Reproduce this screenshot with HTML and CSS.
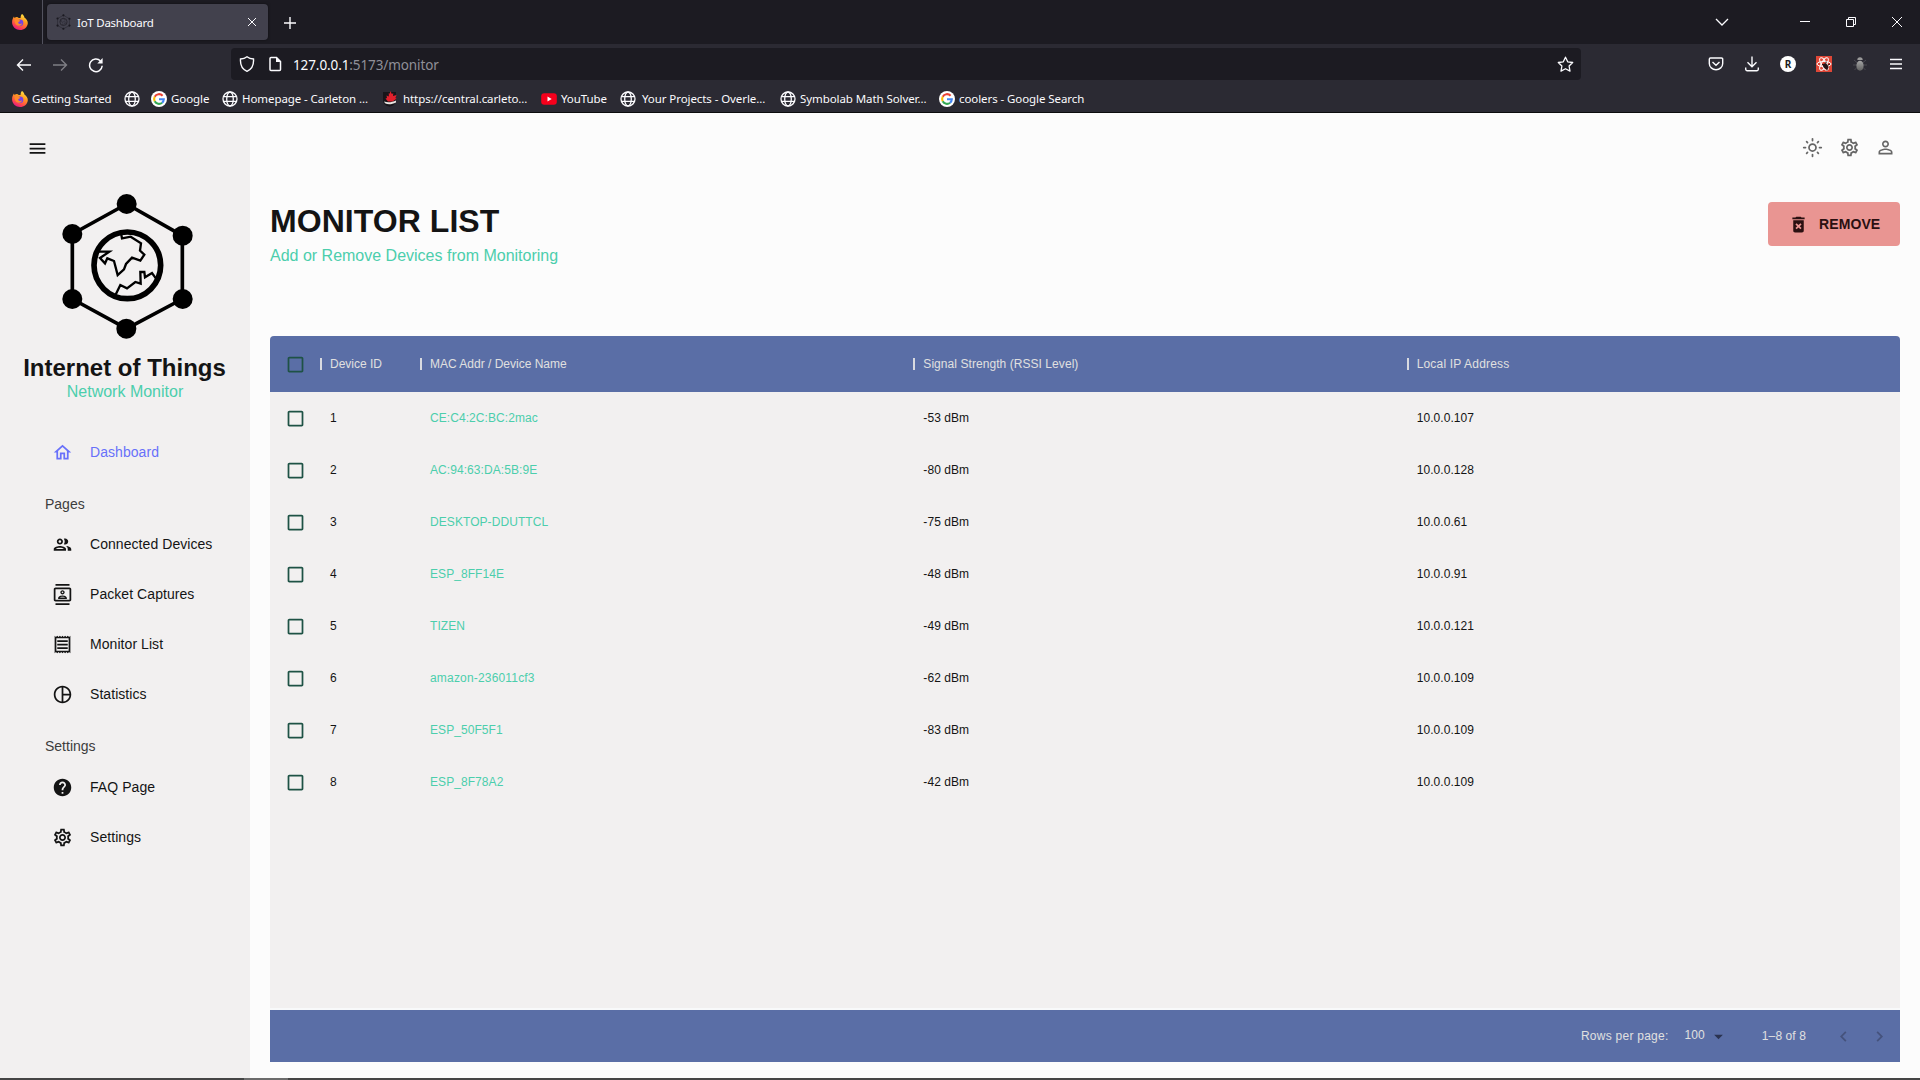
FILE: index.html
```html
<!DOCTYPE html>
<html lang="en">
<head>
<meta charset="utf-8">
<title>IoT Dashboard</title>
<link rel="stylesheet" href="styles.css">
</head>
<body>
<svg class="defs" width="0" height="0" aria-hidden="true">
  <defs>
    <linearGradient id="fx-flame" x1="0.8" y1="0" x2="0.3" y2="1">
      <stop offset="0" stop-color="#fff04a"/><stop offset="0.4" stop-color="#ff9a1f"/><stop offset="0.75" stop-color="#ff4a4a"/><stop offset="1" stop-color="#e31587"/>
    </linearGradient>
    <linearGradient id="bug-body" x1="0" y1="0" x2="0" y2="1"><stop offset="0" stop-color="#a5a5a5"/><stop offset="1" stop-color="#5e5e5e"/></linearGradient>
  </defs>
  <symbol id="firefox" viewBox="0 0 16 16">
    <path d="M10 0c1.600 1 2.200 2.300 2.400 3.400C14.600 5 16 7 15.800 9.500 15.400 13.300 12.200 16 8 16S.3 12.900.1 8.800C0 6.300.8 4 2 2.600l.5 1.500C3.200 3.200 4.300 2.800 5.200 2.900 6.200 3.800 7.500 4 8.600 4 8.500 2.500 9 1 10 0z" fill="url(#fx-flame)"/>
    <circle cx="8" cy="8.700" r="3.300" fill="#7542e5"/>
    <path d="M2.800 4.800C4.800 4.200 6.500 5 7.400 6.200 8.600 6.300 8.500 7.300 7.200 7.600 5.800 8 6 9.300 7 9.800c1.200.6 2.500.2 3-.7-.1 2-1.800 3-3.600 2.700C3.500 11.300 2 8 2.800 4.800z" fill="#ff8a2a"/>
  </symbol>
  <symbol id="globe" viewBox="0 0 16 16">
    <g fill="none" stroke="#fbfbfe" stroke-width="1.300"><circle cx="8" cy="8" r="7"/><ellipse cx="8" cy="8" rx="3.300" ry="7"/><path d="M1.500 5.700h13M1.500 10.300h13"/></g>
  </symbol>
  <symbol id="google" viewBox="0 0 16 16">
    <circle cx="8" cy="8" r="8" fill="#fff"/>
    <g fill="none" stroke-width="2.100"><path d="M11.600 4.700A4.900 4.900 0 0 0 3.700 5.700" stroke="#ea4335"/><path d="M3.700 5.700a4.900 4.900 0 0 0 0 4.600" stroke="#fbbc05"/><path d="M3.700 10.300a4.900 4.900 0 0 0 7.400 1.400" stroke="#34a853"/><path d="M11.100 11.700A4.900 4.900 0 0 0 12.800 8.200H8" stroke="#4285f4"/></g>
  </symbol>
  <symbol id="network" viewBox="183 246 399 444">
    <path d="M380 282 547 377V567L380 656 217 567V372Z" fill="none" stroke="currentColor" stroke-width="11"/>
    <g fill="currentColor"><circle cx="380" cy="282" r="30"/><circle cx="548" cy="377" r="30"/><circle cx="548" cy="567" r="30"/><circle cx="379" cy="656" r="30"/><circle cx="217" cy="567" r="30"/><circle cx="217" cy="372" r="30"/></g>
    <circle cx="382" cy="466" r="100" fill="none" stroke="currentColor" stroke-width="17"/>
    <path d="M363 370 366 385 392 380 423 400 420 422 433 434 421 452 396 443 378 462 372 478 353 495 342 453 322 445 315 460 300 444 328 425H290M346 556 361 525 381 535 406 516 422 521 421 486H433L435 502 456 489 470 508" fill="none" stroke="currentColor" stroke-width="7"/>
  </symbol>
  <symbol id="gear" viewBox="0 0 24 24"><path d="M19.430 12.980c.04-.32.07-.64.07-.98 0-.34-.03-.66-.07-.98l2.110-1.650c.19-.15.24-.42.12-.64l-2-3.460c-.09-.16-.26-.25-.44-.25-.06 0-.12.01-.17.03l-2.490 1c-.52-.4-1.080-.73-1.690-.98l-.38-2.650C14.460 2.180 14.250 2 14 2h-4c-.25 0-.46.18-.49.42l-.38 2.650c-.61.25-1.170.59-1.690.98l-2.490-1c-.06-.02-.12-.03-.18-.03-.17 0-.34.09-.43.25l-2 3.460c-.13.22-.07.49.12.64l2.110 1.650c-.04.32-.07.65-.07.98 0 .33.03.66.07.98l-2.110 1.650c-.19.15-.24.42-.12.64l2 3.460c.09.16.26.25.44.25.06 0 .12-.01.17-.03l2.490-1c.52.4 1.080.73 1.690.98l.38 2.650c.03.24.24.42.49.42h4c.25 0 .46-.18.49-.42l.38-2.650c.61-.25 1.170-.59 1.690-.98l2.490 1c.06.02.12.03.18.03.17 0 .34-.09.43-.25l2-3.460c.12-.22.07-.49-.12-.64l-2.110-1.650zm-1.980-1.710c.04.31.05.52.05.73 0 .21-.02.43-.05.73l-.14 1.130.89.7 1.080.84-.7 1.210-1.270-.51-1.040-.42-.9.68c-.43.32-.84.56-1.250.73l-1.060.43-.16 1.130-.2 1.350h-1.400l-.19-1.350-.16-1.130-1.060-.43c-.43-.18-.83-.41-1.230-.71l-.91-.7-1.060.43-1.270.51-.7-1.210 1.080-.84.89-.7-.14-1.130c-.03-.31-.05-.54-.05-.74s.02-.43.05-.73l.14-1.130-.89-.7-1.080-.84.7-1.210 1.270.51 1.040.42.9-.68c.43-.32.84-.56 1.250-.73l1.060-.43.16-1.130.2-1.350h1.390l.19 1.350.16 1.130 1.060.43c.43.18.83.41 1.230.71l.91.7 1.060-.43 1.270-.51.7 1.210-1.070.85-.89.7.14 1.130zM12 8c-2.210 0-4 1.790-4 4s1.790 4 4 4 4-1.790 4-4-1.790-4-4-4zm0 6c-1.100 0-2-.9-2-2s.9-2 2-2 2 .9 2 2-.9 2-2 2z"/></symbol>
  <symbol id="box" viewBox="0 0 24 24"><path d="M19 5v14H5V5h14m0-2H5c-1.100 0-2 .9-2 2v14c0 1.100.9 2 2 2h14c1.100 0 2-.9 2-2V5c0-1.100-.9-2-2-2z"/></symbol>
</svg>

<header class="browser">
  <div class="tabbar">
    <div class="view"><svg width="16" height="16"><use href="#firefox"/></svg></div>
    <div class="tab">
      <svg class="favicon" width="15" height="16"><use href="#network"/></svg>
      <span class="tab-title">IoT Dashboard</span>
      <svg class="line" width="10" height="10" viewBox="0 0 10 10"><path d="M1 1l8 8M9 1 1 9"/></svg>
    </div>
    <svg class="line newtab" width="14" height="14" viewBox="0 0 14 14"><path d="M7 1v12M1 7h12" stroke-width="1.400"/></svg>
    <div class="window-tools">
      <svg class="line" width="14" height="14" viewBox="0 0 14 14"><path d="M1 4l6 6 6-6" stroke-width="1.300"/></svg>
      <svg class="line min" width="10" height="10" viewBox="0 0 10 10"><path d="M0 4.500h10"/></svg>
      <svg class="line" width="10" height="10" viewBox="0 0 10 10"><path d="M.5 2.500h7v7h-7zM2.500 2.500v-2h7v7h-2"/></svg>
      <svg class="line" width="10" height="10" viewBox="0 0 10 10"><path d="M0 0l10 10M10 0 0 10"/></svg>
    </div>
  </div>
  <div class="navbar">
    <div class="nav-buttons">
      <svg class="line" width="16" height="16" viewBox="0 0 16 16"><path d="M15 8H1.500M7 2.500 1.500 8 7 13.500" stroke-width="1.400"/></svg>
      <svg class="line off" width="16" height="16" viewBox="0 0 16 16"><path d="M1 8h13.500M9 2.500 14.500 8 9 13.500" stroke-width="1.400"/></svg>
      <svg class="line" width="16" height="16" viewBox="0 0 16 16"><path d="M14.200 8.800A6.300 6.300 0 1 1 12.500 4" stroke-width="1.500"/><path d="M14.600 1v5.500H9.300z" class="solid"/></svg>
    </div>
    <div class="urlbar">
      <svg class="line" width="16" height="16" viewBox="0 0 16 16"><path d="M8 .8C6 2.400 3.800 2.900 1.500 3c-.4 5.500 1.500 10.300 6.500 12.300 5-2 6.900-6.800 6.500-12.300C12.200 2.900 10 2.400 8 .8z" stroke-width="1.400"/></svg>
      <svg class="line" width="16" height="16" viewBox="0 0 16 16"><path d="M4 1.500h5.500L13.500 5.500v8a1 1 0 0 1-1 1h-8.500a1 1 0 0 1-1-1v-11a1 1 0 0 1 1-1z" stroke-width="1.500"/><path d="M9 1.200V6h4.800z" class="solid"/></svg>
      <span class="url"><b>127.0.0.1</b>:5173/monitor</span>
      <svg class="line star" width="17" height="17" viewBox="0 0 17 17"><path d="M8.500 1.200l2.200 4.600 5 .7-3.600 3.500.9 5.100-4.500-2.400L4 15.100l.9-5.100L1.300 6.500l5-.7z" stroke-width="1.300" stroke-linejoin="round"/></svg>
    </div>
    <div class="extensions">
      <svg class="line" width="16" height="16" viewBox="0 0 16 16"><path d="M2.500 2h11a1.200 1.200 0 0 1 1.200 1.200V7.500a6.700 6.200 0 0 1-13.400 0V3.200A1.200 1.200 0 0 1 2.500 2zM4.500 6 8 9.300 11.500 6" stroke-width="1.400"/></svg>
      <svg class="line" width="16" height="16" viewBox="0 0 16 16"><path d="M8 .5v10.300M3.500 6.300 8 10.800l4.500-4.500M1.700 11.500v1.700a1.500 1.500 0 0 0 1.500 1.500h9.600a1.500 1.500 0 0 0 1.500-1.500v-1.700" stroke-width="1.400"/></svg>
      <span class="avatar">R</span>
      <svg width="16" height="16" viewBox="0 0 16 16"><path d="M0 0h16v16H0z" fill="#df4737"/><g fill="none" stroke="#fff" stroke-width="1"><ellipse cx="8" cy="8" rx="7" ry="2.600"/><ellipse cx="8" cy="8" rx="7" ry="2.600" transform="rotate(60 8 8)"/><ellipse cx="8" cy="8" rx="7" ry="2.600" transform="rotate(120 8 8)"/></g><ellipse cx="9.700" cy="10.300" rx="2.300" ry="3.200" fill="#241517" transform="rotate(-35 9.700 10.300)"/><path d="M6 8.500h3M10 7.500v-2M12 9l2-1M11 13v1.500" stroke="#241517"/></svg>
      <svg width="16" height="16" viewBox="0 0 16 16"><path d="M2 4l3 2.500M14 4l-3 2.500M1 9h14M2.500 14 5 11.500M13.500 14 11 11.500" stroke="#4a4951" stroke-width="1" fill="none"/><ellipse cx="8" cy="9.800" rx="3.600" ry="5" fill="url(#bug-body)"/><path d="M5.300 4a2.700 2.700 0 0 1 5.400 0z" fill="#999"/></svg>
      <svg class="line" width="16" height="16" viewBox="0 0 16 16"><path d="M2 3.500h12M2 8h12M2 12.500h12" stroke-width="1.300"/></svg>
    </div>
  </div>
  <nav class="bookmarks">
    <span class="bm bm-start"><svg width="16" height="16"><use href="#firefox"/></svg>Getting Started</span>
    <span class="bm bm-blank"><svg width="16" height="16"><use href="#globe"/></svg></span>
    <span class="bm bm-google"><svg width="16" height="16"><use href="#google"/></svg>Google</span>
    <span class="bm bm-home"><svg width="16" height="16"><use href="#globe"/></svg>Homepage - Carleton ...</span>
    <span class="bm bm-central"><svg width="16" height="16" viewBox="0 0 16 16"><path d="M1 1h13v8c0 4-3 6-6.500 6.700C4 15 1 13 1 9z" fill="#17151a"/><path d="M8.500 0l1.300 3 1.500-.8-.3 2.800L14.500 4l-1 3 1 .8-4 2.700H6L3.500 7.500 5 7 4.500 4.500l2.300 1L6.800 2l1 .8z" fill="#e0202c"/><path d="M2 10.500c4 1.500 8 .8 12-1v2c-4 2-8 2.300-11 .8z" fill="#e8e4e0"/></svg>https://central.carleto...</span>
    <span class="bm bm-youtube"><svg width="16" height="16" viewBox="0 0 16 16"><rect x=".2" y="2.200" width="15.600" height="11.600" rx="3" fill="#f6001c"/><path d="M6.500 5.500v5L10.700 8z" fill="#fff"/></svg>YouTube</span>
    <span class="bm bm-overleaf"><svg width="16" height="16"><use href="#globe"/></svg>Your Projects - Overle...</span>
    <span class="bm bm-symbolab"><svg width="16" height="16"><use href="#globe"/></svg>Symbolab Math Solver...</span>
    <span class="bm bm-coolers"><svg width="16" height="16"><use href="#google"/></svg>coolers - Google Search</span>
  </nav>
</header>

<div class="app">
  <aside class="sidebar">
    <div class="collapse"><svg class="icon" viewBox="0 0 24 24"><path d="M3 18h18v-2H3v2zm0-5h18v-2H3v2zm0-7v2h18V6H3z"/></svg></div>
    <svg class="logo" width="133" height="148"><use href="#network"/></svg>
    <h2 class="brand">Internet of Things</h2>
    <div class="brand-sub">Network Monitor</div>
    <a class="item active"><svg class="icon" viewBox="0 0 24 24"><path d="m12 5.690 5 4.500V18h-2v-6H9v6H7v-7.810l5-4.500M12 3 2 12h3v8h6v-6h2v6h6v-8h3L12 3z"/></svg>Dashboard</a>
    <div class="section">Pages</div>
    <a class="item"><svg class="icon" viewBox="0 0 24 24"><path d="M9 13.750c-2.340 0-7 1.170-7 3.500V19h14v-1.750c0-2.330-4.660-3.500-7-3.500zM4.340 17c.84-.58 2.870-1.250 4.660-1.250s3.820.67 4.660 1.250H4.340zM9 12c1.930 0 3.500-1.570 3.500-3.500S10.930 5 9 5 5.500 6.570 5.500 8.500 7.070 12 9 12zm0-5c.83 0 1.500.67 1.500 1.500S9.830 10 9 10s-1.500-.67-1.500-1.500S8.170 7 9 7zm7.040 6.810c1.160.84 1.960 1.960 1.960 3.440V19h4v-1.750c0-2.020-3.500-3.170-5.960-3.440zM15 12c1.930 0 3.500-1.570 3.500-3.500S16.930 5 15 5c-.54 0-1.040.13-1.500.35.63.89 1 1.980 1 3.150s-.37 2.260-1 3.150c.46.22.96.35 1.500.35z"/></svg>Connected Devices</a>
    <a class="item"><svg class="icon" viewBox="0 0 24 24"><path d="M20 4H4c-1.100 0-2 .9-2 2v12c0 1.100.9 2 2 2h16c1.100 0 2-.9 2-2V6c0-1.100-.9-2-2-2zm0 14H4V6h16v12zM4 0h16v2H4zm0 22h16v2H4zm8-10c1.380 0 2.500-1.120 2.500-2.500S13.380 7 12 7 9.500 8.120 9.500 9.500 10.620 12 12 12zm0-3.500c.55 0 1 .45 1 1s-.45 1-1 1-1-.45-1-1 .45-1 1-1zm5 7.490C17 13.900 13.690 13 12 13s-5 .9-5 2.990V17h10v-1.010zm-8.190-.49c.61-.52 2.030-1 3.190-1 1.170 0 2.590.48 3.200 1H8.810z"/></svg>Packet Captures</a>
    <a class="item"><svg class="icon" viewBox="0 0 24 24"><path d="M19.500 3.500 18 2l-1.500 1.500L15 2l-1.500 1.500L12 2l-1.500 1.500L9 2 7.500 3.500 6 2 4.500 3.500 3 2v20l1.500-1.500L6 22l1.500-1.500L9 22l1.500-1.500L12 22l1.500-1.500L15 22l1.500-1.500L18 22l1.500-1.500L21 22V2l-1.500 1.500zM19 19.090H5V4.910h14v14.180zM6 15h12v2H6zm0-4h12v2H6zm0-4h12v2H6z"/></svg>Monitor List</a>
    <a class="item"><svg class="icon" viewBox="0 0 24 24"><path d="M12 2C6.480 2 2 6.480 2 12s4.480 10 10 10 10-4.480 10-10S17.520 2 12 2zm1 2.070c3.610.45 6.480 3.330 6.930 6.930H13V4.070zM4 12c0-4.060 3.070-7.440 7-7.930v15.870c-3.930-.5-7-3.880-7-7.940zm9 7.930V13h6.930c-.45 3.610-3.320 6.480-6.930 6.930z"/></svg>Statistics</a>
    <div class="section">Settings</div>
    <a class="item"><svg class="icon" viewBox="0 0 24 24"><path d="M12 2C6.480 2 2 6.480 2 12s4.480 10 10 10 10-4.480 10-10S17.520 2 12 2zm1 17h-2v-2h2v2zm2.070-7.750-.9.920C13.450 12.900 13 13.500 13 15h-2v-.5c0-1.100.45-2.100 1.170-2.830l1.240-1.260c.37-.36.59-.86.59-1.410 0-1.100-.9-2-2-2s-2 .9-2 2H8c0-2.210 1.790-4 4-4s4 1.790 4 4c0 .88-.36 1.680-.93 2.250z"/></svg>FAQ Page</a>
    <a class="item"><svg class="icon"><use href="#gear"/></svg>Settings</a>
  </aside>

  <main class="content">
    <div class="topbar">
      <svg class="icon" viewBox="0 0 24 24"><circle cx="12" cy="12" r="4" fill="none" stroke="currentColor" stroke-width="2"/><path d="M12 2v2M12 20v2M2 12h2M20 12h2M5.300 5.300l1 1M17.700 17.700l1 1M5.300 18.700l1-1M17.700 6.300l1-1" stroke="currentColor" stroke-width="2" stroke-linecap="round"/></svg>
      <svg class="icon"><use href="#gear"/></svg>
      <svg class="icon" viewBox="0 0 24 24"><path d="M12 5.900c1.160 0 2.100.94 2.100 2.100s-.94 2.100-2.100 2.100S9.900 9.160 9.900 8s.94-2.100 2.100-2.100m0 9c2.970 0 6.100 1.460 6.100 2.100v1.100H5.900V17c0-.64 3.130-2.100 6.100-2.100M12 4C9.790 4 8 5.790 8 8s1.790 4 4 4 4-1.790 4-4-1.790-4-4-4zm0 9c-2.670 0-8 1.340-8 4v3h16v-3c0-2.660-5.330-4-8-4z"/></svg>
    </div>
    <div class="heading">
      <div>
        <h1>MONITOR LIST</h1>
        <p>Add or Remove Devices from Monitoring</p>
      </div>
      <button class="remove"><svg class="icon" viewBox="0 0 24 24"><path d="M6 19c0 1.100.9 2 2 2h8c1.100 0 2-.9 2-2V7H6v12zm2.460-7.120 1.410-1.410L12 12.590l2.120-2.120 1.410 1.410L13.410 14l2.120 2.120-1.410 1.410L12 15.410l-2.120 2.120-1.410-1.410L10.590 14l-2.130-2.120zM15.500 4l-1-1h-5l-1 1H5v2h14V4z"/></svg>REMOVE</button>
    </div>
    <section class="grid">
      <div class="row head"><span class="check"><svg class="icon"><use href="#box"/></svg></span><span class="col">Device ID</span><span class="col">MAC Addr / Device Name</span><span class="col wide">Signal Strength (RSSI Level)</span><span class="col wider">Local IP Address</span></div>
      <div class="rows">
        <div class="row"><span class="check"><svg class="icon"><use href="#box"/></svg></span><span>1</span><span class="name">CE:C4:2C:BC:2mac</span><span>-53 dBm</span><span>10.0.0.107</span></div>
        <div class="row"><span class="check"><svg class="icon"><use href="#box"/></svg></span><span>2</span><span class="name">AC:94:63:DA:5B:9E</span><span>-80 dBm</span><span>10.0.0.128</span></div>
        <div class="row"><span class="check"><svg class="icon"><use href="#box"/></svg></span><span>3</span><span class="name">DESKTOP-DDUTTCL</span><span>-75 dBm</span><span>10.0.0.61</span></div>
        <div class="row"><span class="check"><svg class="icon"><use href="#box"/></svg></span><span>4</span><span class="name">ESP_8FF14E</span><span>-48 dBm</span><span>10.0.0.91</span></div>
        <div class="row"><span class="check"><svg class="icon"><use href="#box"/></svg></span><span>5</span><span class="name">TIZEN</span><span>-49 dBm</span><span>10.0.0.121</span></div>
        <div class="row"><span class="check"><svg class="icon"><use href="#box"/></svg></span><span>6</span><span class="name wider">amazon-236011cf3</span><span>-62 dBm</span><span>10.0.0.109</span></div>
        <div class="row"><span class="check"><svg class="icon"><use href="#box"/></svg></span><span>7</span><span class="name">ESP_50F5F1</span><span>-83 dBm</span><span>10.0.0.109</span></div>
        <div class="row"><span class="check"><svg class="icon"><use href="#box"/></svg></span><span>8</span><span class="name">ESP_8F78A2</span><span>-42 dBm</span><span>10.0.0.109</span></div>
      </div>
      <div class="footer">
        <span class="rpp">Rows per page:</span>
        <span class="size">100</span>
        <svg class="icon caret" viewBox="0 0 24 24"><path d="M7 10l5 5 5-5z"/></svg>
        <span class="range">1–8 of 8</span>
        <svg class="icon page" viewBox="0 0 24 24"><path d="M15.410 16.590 10.830 12l4.580-4.590L14 6l-6 6 6 6 1.410-1.410z"/></svg>
        <svg class="icon page" viewBox="0 0 24 24"><path d="M8.590 16.590 13.170 12 8.590 7.410 10 6l6 6-6 6-1.410-1.410z"/></svg>
      </div>
    </section>
  </main>
</div>
<div class="taskbar"><i></i></div>
</body>
</html>
```

FILE: styles.css
```css
* { box-sizing: border-box; }
body {
  margin: 0;
  width: 1920px;
  height: 1080px;
  overflow: hidden;
  display: flex;
  flex-direction: column;
  background: #fcfcfc;
  color: #141414;
  font: 14px/20px "Liberation Sans", Arial, sans-serif;
}
svg { display: block; flex: none; }
.defs { position: absolute; }
.icon { width: 21px; height: 21px; fill: currentColor; }

/* Browser chrome */
.browser {
  height: 113px;
  flex: none;
  background: #2b2a33;
  border-bottom: 1px solid #0c0c0d;
  color: #fbfbfe;
  font-family: "Noto Sans", "Open Sans", sans-serif;
}
.line { fill: none; stroke: #fbfbfe; stroke-width: 1; }
.line.off { opacity: .4; }
.solid { fill: #fbfbfe; stroke: none; }
.tabbar { height: 44px; display: flex; align-items: center; background: #1c1b22; }
.view { width: 43px; height: 44px; padding: 14px 0 0 12px; border-right: 1px solid #52525e; }
.tab {
  width: 221px;
  height: 36px;
  margin-left: 4px;
  padding: 0 11px 0 9px;
  display: flex;
  align-items: center;
  border-radius: 4px;
  background: #42414d;
  box-shadow: 0 0 3px rgba(0, 0, 0, .5);
}
.favicon { color: #1a1920; }
.tab-title { flex: 1; margin-left: 6px; padding-top: 1px; font-size: 11.500px; letter-spacing: -.25px; }
.newtab { margin: 2px 0 0 15px; }
.window-tools { margin-left: auto; padding-right: 18px; display: flex; align-items: center; gap: 36px; }
.window-tools .min { margin-left: 35px; }
.navbar { height: 36px; padding-top: 4px; display: flex; }
.nav-buttons { width: 231px; padding: 1px 0 0 16px; display: flex; align-items: center; gap: 20px; }
.urlbar {
  width: 1350px;
  height: 32px;
  padding: 0 7px 0 8px;
  display: flex;
  align-items: center;
  gap: 12px;
  border-radius: 4px;
  background: #1c1b22;
}
.url { flex: 1; margin-left: -2px; padding-top: 2px; color: #8f8f98; font-size: 13.500px; letter-spacing: -.1px; }
.url b { color: #fbfbfe; font-weight: 400; }
.extensions { margin-left: auto; padding-right: 16px; display: flex; align-items: center; gap: 20px; }
.avatar {
  width: 16px;
  height: 16px;
  border-radius: 50%;
  background: #fff;
  color: #1c1b22;
  text-align: center;
  font-size: 10px;
  line-height: 16px;
  font-weight: 700;
}
.bookmarks { height: 32px; padding: 5px 0 0 12px; display: flex; align-items: center; font-size: 11.500px; white-space: nowrap; }
.bm { display: flex; align-items: center; gap: 4px; flex: none; letter-spacing: -.08px; }
.bm-start { width: 112px; letter-spacing: -.22px; }
.bm-blank { width: 27px; }
.bm-google { width: 71px; }
.bm-home { width: 160px; }
.bm-central { width: 159px; gap: 5px; }
.bm-youtube { width: 79px; }
.bm-overleaf { width: 160px; gap: 6px; }
.bm-symbolab { width: 159px; }

/* Application */
.app { flex: 1; display: flex; min-height: 0; }
.sidebar { width: 250px; background: #f2f0f0; display: flex; flex-direction: column; }
.collapse { height: 79px; padding: 25px 0 0 27px; }
.logo { margin-left: 61px; color: #000; }
.brand { margin: 14px 0 0; padding-right: 1px; text-align: center; font-size: 24px; line-height: 28px; font-weight: 700; }
.brand-sub { margin: 0 0 25px; text-align: center; font-size: 16px; line-height: 20px; color: #4cceac; }
.item { height: 50px; padding-left: 52px; display: flex; align-items: center; gap: 17px; color: #141414; letter-spacing: .06px; }
.item.active { color: #6870fa; margin-bottom: 17px; }
.section { height: 20px; margin-bottom: 5px; padding-left: 45px; color: #3d3d3d; }
.item + .section { margin-top: 17px; margin-bottom: 6px; }
.item.active + .section { margin-top: 0; margin-bottom: 5px; }
.content { flex: 1; padding: 0 20px; display: flex; flex-direction: column; }
.topbar { height: 89px; padding: 24px 4px 0 0; display: flex; justify-content: flex-end; gap: 15.500px; color: #666; }
.heading { height: 134px; display: flex; align-items: flex-start; justify-content: space-between; }
h1 { margin: 0; font-size: 32px; line-height: 38px; font-weight: 700; letter-spacing: .05px; }
.heading p { margin: 6px 0 0; font-size: 16px; line-height: 20px; color: #4cceac; }
.remove {
  width: 132px;
  height: 44px;
  padding: 0 0 0 20px;
  display: flex;
  align-items: center;
  gap: 10px;
  border: 0;
  border-radius: 4px;
  background: #e99592;
  color: #2b1011;
  font: 700 14px "Liberation Sans", Arial, sans-serif;
  letter-spacing: .1px;
}
.grid { height: 726px; display: flex; flex-direction: column; background: #f2f0f0; font-size: 12px; border-radius: 4px 4px 0 0; overflow: hidden; }
.row { height: 52px; display: grid; grid-template-columns: 50px 100px repeat(3, 1fr); align-items: center; letter-spacing: .07px; }
.row > span { padding-left: 10px; }
.row > .check { padding-left: 15px; color: #1e5245; }
.row .name { color: #4cceac; }
.rows { flex: 1; }
.head { height: 56px; background: #5a6ea6; color: #e0e0e0; letter-spacing: 0; }
.row > .wide { letter-spacing: .06px; }
.row > .wider { letter-spacing: .18px; }
.head > .col { display: flex; align-items: center; gap: 8px; padding-left: 0; }
.head > .col::before { content: ""; width: 2px; height: 12px; background: #d8dae0; }
.footer { height: 54px; border-top: 2px solid #f8f9fa; display: flex; align-items: center; justify-content: flex-end; padding-right: 10px; background: #5a6ea6; color: #e0e0e0; }
.rpp { letter-spacing: .25px; margin-right: 16px; }
.size { margin-top: -2px; letter-spacing: .1px; }
.caret { margin: 0 33px 0 3px; color: #2b3350; }
.range { margin-right: 27px; letter-spacing: .1px; }
.page { color: #45527c; }
.page + .page { margin-left: 15px; }
.taskbar { height: 2px; flex: none; background: #454545; display: flex; }
.taskbar i { width: 44px; margin-left: 244px; background: #6c6c6c; }
```
